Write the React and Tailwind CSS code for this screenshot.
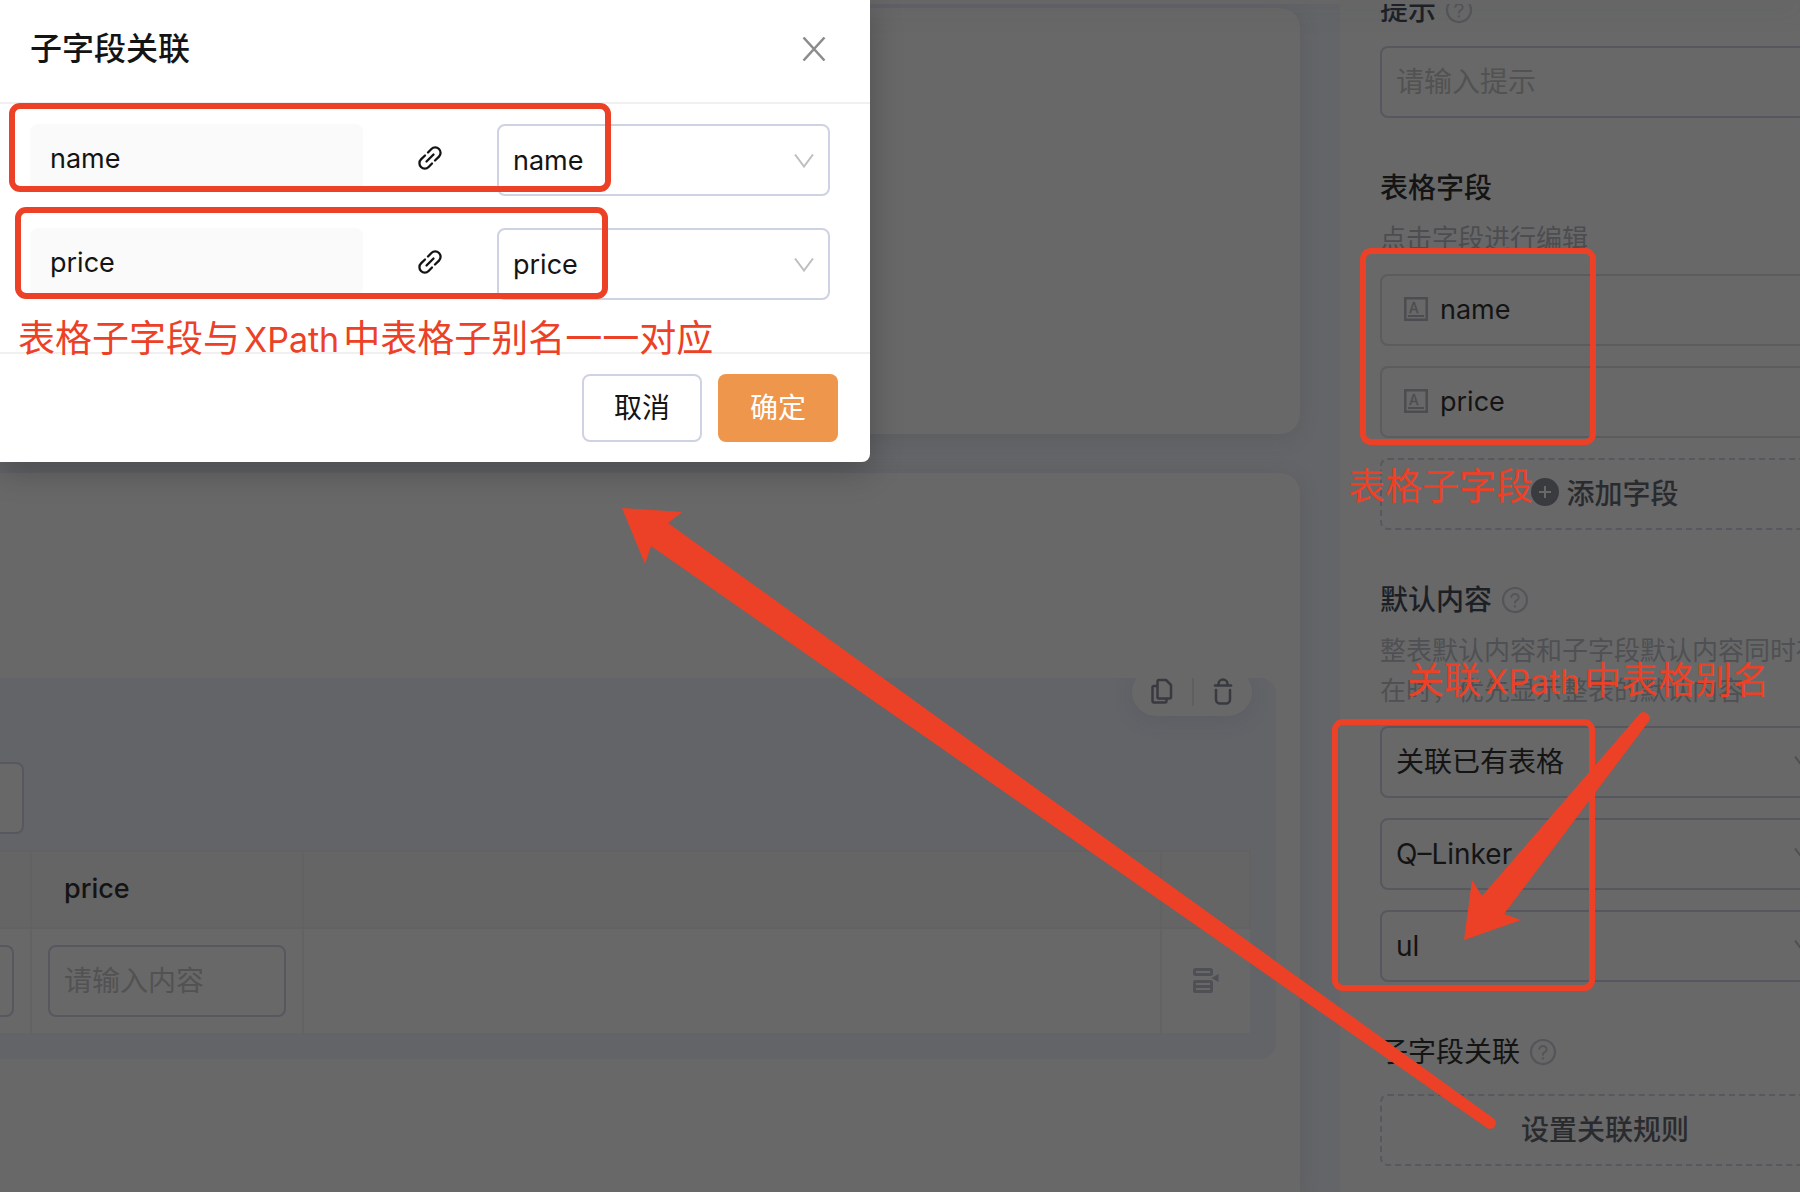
import { AiOutlineQuestionCircle } from "react-icons/ai";

const fields = ["name", "price"];
const sources = ["关联已有表格", "Q–Linker", "ul"];

function Chevron({ className }) {
  return (
    <svg
      viewBox="0 0 20 14"
      className={`pointer-events-none absolute bottom-7 right-4 h-[14px] w-5 ${className}`}
      fill="none"
      stroke="currentColor"
      strokeWidth="2"
    >
      <path d="M1 0.5 10 12.5 19 0.5" />
    </svg>
  );
}

function Select({ label, value, className, chevron }) {
  return (
    <div className="relative">
      <select
        aria-label={label}
        defaultValue={value}
        className={`block h-[72px] w-full appearance-none rounded-lg border-2 bg-transparent px-[14px] text-[#141414] ${className}`}
      >
        <option>{value}</option>
      </select>
      <Chevron className={chevron} />
    </div>
  );
}

function LinkIcon() {
  return (
    <svg viewBox="0 0 24 24" className="h-6 w-6" fill="none" stroke="#141414" strokeWidth="2.3" strokeLinecap="round">
      <path d="M10 6.5 13.4 3a5.3 5.3 0 0 1 7.6 7.6l-4 3.9" />
      <path d="M14 17.5 10.6 21A5.3 5.3 0 0 1 3 13.4l4-3.9" />
      <path d="M8.5 15.5l7-7" />
    </svg>
  );
}

function FieldIcon() {
  return (
    <svg viewBox="0 0 24 24" className="mb-[2px] h-6 w-6">
      <rect x="1.25" y="1.25" width="21.5" height="21.5" fill="none" stroke="#4c4d51" strokeWidth="2.5" />
      <text x="5" y="16" fontSize="14" fill="#4c4d51" stroke="#4c4d51" strokeWidth="0.4">A</text>
      <path d="M4 19h16" stroke="#4c4d51" strokeWidth="2" />
    </svg>
  );
}

function InsertRowIcon() {
  return (
    <svg viewBox="0 0 26 26" className="h-[26px] w-[26px]" fill="none" stroke="#4f5056" strokeWidth="3">
      <rect x="1.5" y="1.5" width="17" height="5" rx="1" />
      <rect x="1.5" y="13.5" width="17" height="10" rx="1" />
      <path d="M2 18.5h16" />
      <path d="M25.500 6v8l-7-4z" fill="#4f5056" stroke="none" />
    </svg>
  );
}

function Label({ children, help }) {
  return (
    <div className="flex items-center gap-2">
      <span>{children}</span>
      {help && <AiOutlineQuestionCircle className="h-[30px] w-[30px] text-[#545559]" />}
    </div>
  );
}

function Toolbar() {
  return (
    <div className="absolute -top-[10px] right-6 flex h-12 w-[120px] items-center justify-between rounded-full bg-[#686868] px-[17px] shadow-[0_4px_20px_rgba(60,60,80,0.16)] [clip-path:inset(10px_-40px_-40px_-40px)]">
      <button aria-label="复制">
        <svg viewBox="0 0 26 28" className="h-7 w-[26px]" fill="none" stroke="#393a40" strokeWidth="2.500" strokeLinejoin="round">
          <path d="M10 2h7l5 5v12a1.500 1.500 0 0 1-1.500 1.500H10A1.500 1.500 0 0 1 8.500 19V3.500A1.500 1.500 0 0 1 10 2z" />
          <path d="M8 8H5a1.500 1.500 0 0 0-1.500 1.500V23A1.500 1.500 0 0 0 5 24.500h11a1.500 1.500 0 0 0 1.500-1.500v-2" />
        </svg>
      </button>
      <div className="h-7 w-[2px] bg-[#5e5f60]" />
      <button aria-label="删除">
        <svg viewBox="0 0 24 28" className="h-7 w-6" fill="none" stroke="#393a40" strokeWidth="2.500" strokeLinecap="round">
          <path d="M4 7.500h16" />
          <path d="M7.500 7V6a4.500 4.500 0 0 1 9 0v1" />
          <path d="M5 12v9.500a4 4 0 0 0 4 4h6a4 4 0 0 0 4-4V12" />
        </svg>
      </button>
    </div>
  );
}

function FormTable() {
  return (
    <table className="w-full table-fixed border-collapse">
      <colgroup>
        <col className="w-[31px]" />
        <col className="w-[272px]" />
        <col />
        <col className="w-[89px]" />
      </colgroup>
      <thead>
        <tr className="h-[77px] border-y-2 border-[#626262] bg-[#656565]">
          <th className="border-r-2 border-[#626262]" />
          <th className="border-r-2 border-[#626262] pl-8 text-left text-[27px] font-medium text-[#141414]">price</th>
          <th className="border-r-2 border-[#626262]" />
          <th className="border-r-2 border-[#626262]" />
        </tr>
      </thead>
      <tbody>
        <tr className="h-[105px] bg-[#686868]">
          <td className="border-r-2 border-[#636363]">
            <div className="h-[72px] w-[14px] rounded-r-lg border-2 border-l-0 border-[#57585f]" />
          </td>
          <td className="border-r-2 border-[#636363] px-4">
            <input
              aria-label="price"
              placeholder="请输入内容"
              className="block h-[72px] w-full rounded-lg border-2 border-[#57585f] px-[14px] text-[28px] placeholder:text-[#525252]"
            />
          </td>
          <td className="border-r-2 border-[#636363]" />
          <td>
            <button aria-label="插入行" className="mx-auto block">
              <InsertRowIcon />
            </button>
          </td>
        </tr>
      </tbody>
    </table>
  );
}

function Canvas() {
  return (
    <main className="flex min-w-0 flex-1 flex-col gap-[39px] pt-1">
      <div className="h-[426px] rounded-r-[20px] bg-[#686868] shadow-[0_4px_20px_rgba(60,64,70,0.2)]" />
      <div className="flex-1 rounded-tr-[20px] bg-[#686868] pr-6 pt-[205px] shadow-[0_4px_20px_rgba(60,64,70,0.2)]">
        <section className="relative rounded-r-2xl bg-[#636468] pb-[26px] pr-[25px] pt-[84px]">
          <Toolbar />
          <div className="mb-4 h-[72px] w-6 rounded-r-lg border-2 border-l-0 border-[#57585f] bg-[#686868]" />
          <FormTable />
        </section>
      </div>
    </main>
  );
}

function SettingsPanel() {
  return (
    <aside className="w-[460px] shrink-0 overflow-hidden bg-[#686868] pl-10">
      <div className="w-[450px] text-[28px] leading-10 text-[#1c1f26]">
        <div className="flex h-3 items-center font-medium">
          <Label help>提示</Label>
        </div>
        <input
          aria-label="提示"
          placeholder="请输入提示"
          className="mt-[30px] block h-[72px] w-full rounded-lg border-2 border-[#57585f] px-[14px] placeholder:text-[#525252]"
        />

        <h3 className="mt-[50px] font-medium text-[#141414]">表格字段</h3>
        <p className="mt-[11px] text-[26px] leading-10 text-[#4c4d51]">点击字段进行编辑</p>
        <div className="mt-[15px] flex flex-col gap-5">
          {fields.map((field) => (
            <button
              key={field}
              className="flex h-[72px] items-center gap-3 rounded-lg border-2 border-[#5c5c5f] px-[22px] text-[27px] text-[#141414]"
            >
              <FieldIcon />
              {field}
            </button>
          ))}
          <button className="flex h-[72px] items-center justify-center gap-[7px] rounded-lg border-2 border-dashed border-[#57585f] font-medium text-[#2a2b2f]">
            <svg viewBox="0 0 28 28" className="mb-1 h-7 w-7">
              <circle cx="14" cy="14" r="14" fill="#3a3b3f" />
              <path d="M8 14h12M14 8v12" stroke="#686868" strokeWidth="2" />
            </svg>
            添加字段
          </button>
        </div>

        <h3 className="mt-[50px] font-medium">
          <Label help>默认内容</Label>
        </h3>
        <p className="mt-[11px] text-[26px] leading-10 text-[#4f5053]">
          整表默认内容和子字段默认内容同时存在时，优先显示整表的默认内容
        </p>
        <div className="mt-[15px] flex flex-col gap-5">
          {sources.map((source) => (
            <Select
              key={source}
              label="默认内容"
              value={source}
              className="border-[#57585f] text-[28px]"
              chevron="text-[#505050]"
            />
          ))}
        </div>

        <h3 className="mt-[50px] text-[#141414]">
          <Label help>子字段关联</Label>
        </h3>
        <button className="mt-[22px] h-[72px] w-full rounded-lg border-2 border-dashed border-[#57585f] font-medium text-[#2a2b2f]">
          设置关联规则
        </button>
      </div>
    </aside>
  );
}

function LinkDialog() {
  return (
    <div
      role="dialog"
      aria-label="子字段关联"
      className="absolute left-0 top-0 w-[870px] rounded-br-lg bg-white shadow-[0_8px_32px_rgba(0,0,0,0.25)]"
    >
      <div className="flex h-[104px] items-center justify-between border-b-2 border-[#f0f0f0] pb-1 pl-[30px] pr-11">
        <h2 className="text-[32px] font-medium leading-10 text-[#141414]">子字段关联</h2>
        <button aria-label="关闭">
          <svg viewBox="0 0 24 24" className="h-6 w-6" fill="none" stroke="#8c8c8c" strokeWidth="2.500">
            <path d="M1.500 0.500 22.500 23.500M22.500 0.500 1.500 23.500" />
          </svg>
        </button>
      </div>
      <div className="flex flex-col gap-8 pb-[52px] pl-[30px] pr-10 pt-5">
        {fields.map((field) => (
          <div key={field} className="grid grid-cols-[1fr_134px_1fr] items-start">
            <div className="flex h-[68px] items-center rounded-lg bg-[#fafafa] px-5 pt-[2px] text-[27px] text-[#141414]">
              {field}
            </div>
            <div className="flex h-[68px] items-center justify-center">
              <LinkIcon />
            </div>
            <Select
              label={field}
              value={field}
              className="border-[#cdd3e2] pt-[2px] text-[27px]"
              chevron="text-[#bfbfbf]"
            />
          </div>
        ))}
      </div>
      <div className="flex justify-end gap-4 border-t-2 border-[#f0f0f0] px-8 py-5 text-[28px]">
        <button className="h-[68px] w-[120px] rounded-lg border-2 border-[#cdd3e2] text-[#141414]">取消</button>
        <button className="h-[68px] w-[120px] rounded-lg bg-[#ee964b] text-white">确定</button>
      </div>
    </div>
  );
}

function Annotations() {
  return (
    <div className="pointer-events-none absolute inset-0 whitespace-nowrap text-[37px] leading-[48px] text-[#ec4126]">
      <svg width="1800" height="1192" viewBox="0 0 1800 1192" className="absolute left-0 top-0 max-w-none">
        <g fill="none" stroke="#ec4126" strokeWidth="6">
          <rect x="12" y="106" width="596" height="83" rx="8" />
          <rect x="18" y="210" width="587" height="86" rx="8" />
          <rect x="1363" y="251" width="230" height="191" rx="8" />
          <rect x="1335" y="722" width="257" height="266" rx="8" />
        </g>
        <g fill="#ec4126">
          <path d="M622 508 682 512 668 523 1493 1118A5.500 5.500 0 0 1 1487 1128L651 546 645 564Z" />
          <path d="M1464 940 1472 880 1482 896 1640 713.500A6 6 0 0 1 1649 721L1504 914 1521 920Z" />
        </g>
      </svg>
      <p className="absolute left-[18px] top-[315px]">
        表格子字段与<span className="mx-1 text-[34px]">XPath</span>中表格子别名一一对应
      </p>
      <p className="absolute left-[1348px] top-[463px]">表格子字段</p>
      <p className="absolute left-[1407px] top-[657px]">
        关联<span className="mx-1 text-[34px]">XPath</span>中表格别名
      </p>
    </div>
  );
}

export default function App() {
  return (
    <div className="relative flex min-h-screen flex-col overflow-hidden bg-[#646568] font-[Inter,'Noto_Sans_CJK_SC',sans-serif]">
      <header className="relative h-1 bg-[#666666] shadow-[0_2px_24px_rgba(70,80,90,0.35)]" />
      <div className="flex flex-1 gap-10">
        <Canvas />
        <SettingsPanel />
      </div>
      <LinkDialog />
      <Annotations />
    </div>
  );
}
